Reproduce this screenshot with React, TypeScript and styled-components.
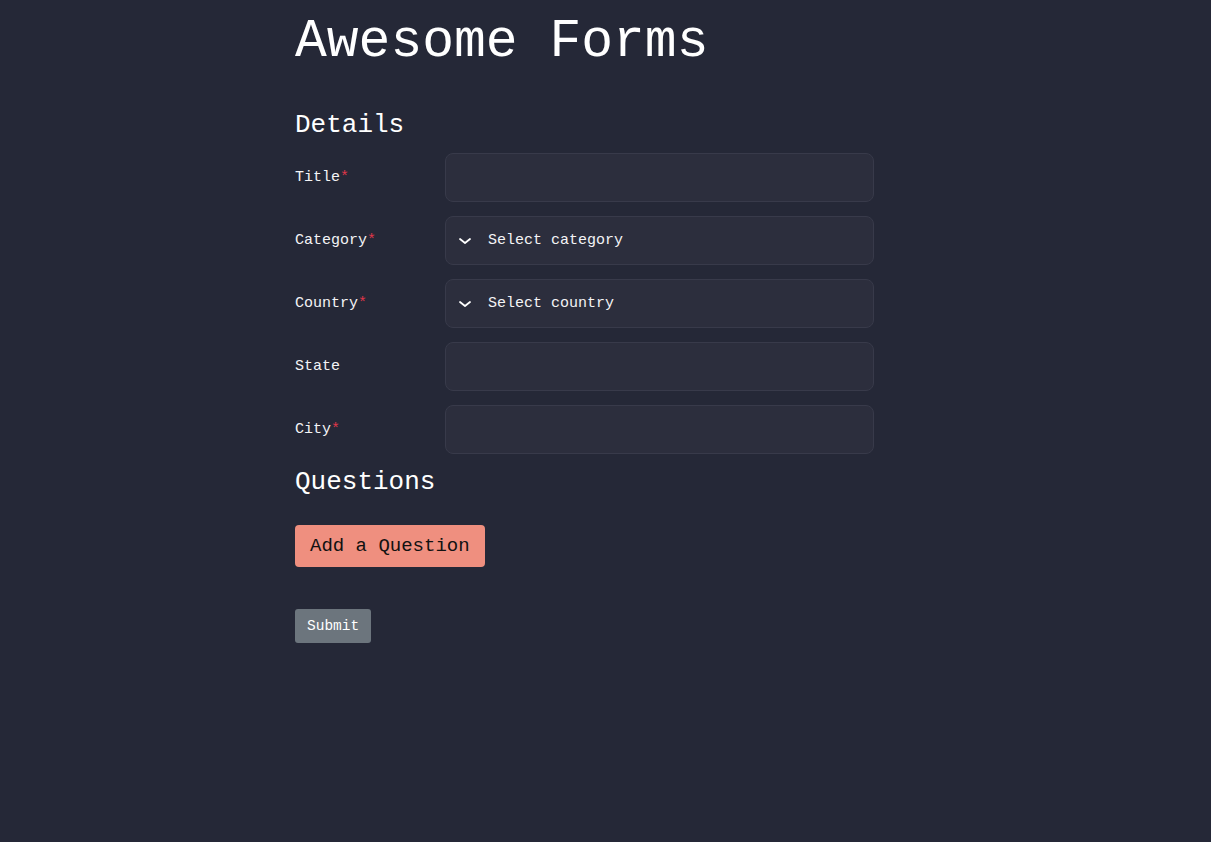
import React from "react";
import styled, { createGlobalStyle } from "styled-components";

const Global = createGlobalStyle`
  html, body { margin: 0; padding: 0; background: #252837; }
  body { font-family: "Liberation Mono", "DejaVu Sans Mono", monospace; color: #ffffff; }
  * { box-sizing: border-box; }
`;

const Page = styled.main`
  width: 621px;
  margin: 0 auto;
  min-height: 842px;
`;

const Title = styled.h1`
  margin: 0;
  padding-top: 11px;
  font-size: 53px;
  font-weight: 400;
  line-height: 62px;
  letter-spacing: 0;
`;

const Section = styled.h2<{ $top: number }>`
  margin: ${(p) => p.$top}px 0 0;
  font-size: 26px;
  font-weight: 400;
  line-height: 32px;
`;

const Form = styled.form`
  width: 579px;
`;

const Fields = styled.div`
  display: flex;
  flex-direction: column;
  gap: 14px;
  margin-top: 12px;
`;

const Row = styled.div`
  display: grid;
  grid-template-columns: 150px 1fr;
  align-items: center;
`;

const Label = styled.label`
  font-size: 15px;
  color: #f4f4f6;
`;

const Star = styled.span`
  color: #e0364a;
`;

const Field = styled.div`
  height: 49px;
  background: #2c2e3d;
  border: 1px solid #383a4a;
  border-radius: 8px;
  display: flex;
  align-items: center;
  gap: 16px;
  padding: 0 12px;
  font-size: 15px;
  color: #f4f4f6;
`;

const AddButton = styled.button`
  margin-top: 27px;
  height: 42px;
  padding: 0 15px;
  background: #ef8f7f;
  border: none;
  border-radius: 4px;
  font-family: inherit;
  font-size: 19px;
  color: #111111;
  display: block;
`;

const SubmitButton = styled.button`
  margin-top: 42px;
  height: 34px;
  padding: 0 12px;
  background: #6c757d;
  border: none;
  border-radius: 3px;
  font-family: inherit;
  font-size: 14.5px;
  color: #ffffff;
  display: block;
`;

const Chevron = () => (
  <svg width="14" height="14" viewBox="0 0 14 14" fill="none">
    <path d="M2 5 L7 9 L12 5" stroke="#ffffff" strokeWidth="1.8" strokeLinecap="round" strokeLinejoin="round" />
  </svg>
);

const fields: { label: string; required: boolean; placeholder?: string }[] = [
  { label: "Title", required: true },
  { label: "Category", required: true, placeholder: "Select category" },
  { label: "Country", required: true, placeholder: "Select country" },
  { label: "State", required: false },
  { label: "City", required: true },
];

export default function App() {
  return (
    <>
      <Global />
      <Page>
        <Title>Awesome Forms</Title>
        <Form onSubmit={(e) => e.preventDefault()}>
          <Section $top={36}>Details</Section>
          <Fields>
            {fields.map((f) => (
              <Row key={f.label}>
                <Label>
                  {f.label}
                  {f.required && <Star>*</Star>}
                </Label>
                <Field>
                  {f.placeholder && (
                    <>
                      <Chevron />
                      <span>{f.placeholder}</span>
                    </>
                  )}
                </Field>
              </Row>
            ))}
          </Fields>
          <Section $top={12}>Questions</Section>
          <AddButton type="button">Add a Question</AddButton>
          <SubmitButton type="submit">Submit</SubmitButton>
        </Form>
      </Page>
    </>
  );
}
